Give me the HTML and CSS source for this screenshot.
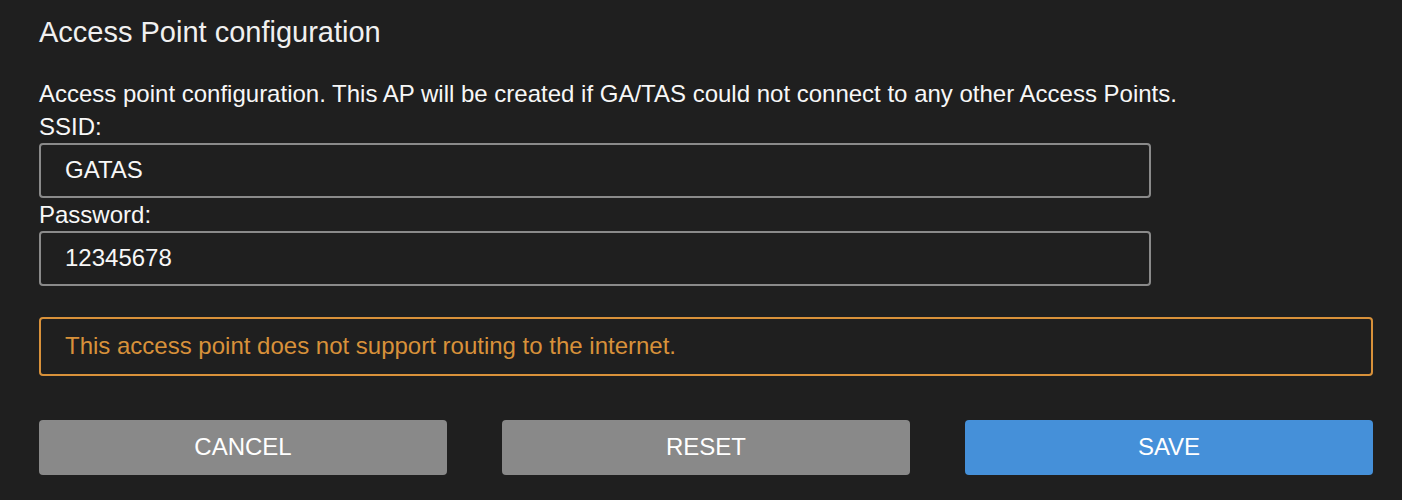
FILE: index.html
```html
<!DOCTYPE html>
<html>
<head>
<meta charset="utf-8">
<link rel="stylesheet" href="styles.css">
</head>
<body>
<div class="page">
  <h1 class="title">Access Point configuration</h1>
  <p class="desc">Access point configuration. This AP will be created if GA/TAS could not connect to any other Access Points.</p>
  <div class="field">
    <label class="label">SSID:</label>
    <div class="input">GATAS</div>
  </div>
  <div class="field">
    <label class="label">Password:</label>
    <div class="input">12345678</div>
  </div>
  <div class="warning">This access point does not support routing to the internet.</div>
  <div class="buttons">
    <button class="btn btn-grey">CANCEL</button>
    <button class="btn btn-grey">RESET</button>
    <button class="btn btn-blue">SAVE</button>
  </div>
</div>
</body>
</html>
```
FILE: styles.css
```css
html, body {
  margin: 0;
  padding: 0;
  background: #1f1f1f;
}
body {
  font-family: "Liberation Sans", Arial, sans-serif;
  font-size: 24px;
  color: #f7f7f7;
}
.page {
  padding: 15px 29px 0 39px;
  display: flex;
  flex-direction: column;
}
.title {
  margin: 0;
  font-size: 29px;
  font-weight: normal;
  line-height: 34.5px;
  color: #f0f0f0;
}
.desc {
  margin: 28px 0 0 0;
  font-size: 24px;
  line-height: 32px;
}
.field {
  display: flex;
  flex-direction: column;
  width: 83.33%;
}
.label {
  font-size: 24px;
  line-height: 33px;
}
.input {
  box-sizing: border-box;
  height: 55px;
  border: 2px solid #8a8a8a;
  border-radius: 4px;
  padding: 0 24px;
  display: flex;
  align-items: center;
  font-size: 24px;
}
.warning {
  box-sizing: border-box;
  margin-top: 31px;
  height: 59px;
  border: 2px solid #d8913a;
  border-radius: 4px;
  padding: 0 24px;
  display: flex;
  align-items: center;
  font-size: 24px;
  color: #d8913a;
}
.buttons {
  margin-top: 44px;
  display: grid;
  grid-template-columns: 1fr 1fr 1fr;
  column-gap: 55px;
}
.btn {
  height: 55px;
  border: none;
  border-radius: 4px;
  font-family: "Liberation Sans", Arial, sans-serif;
  font-size: 24px;
  color: #ffffff;
}
.btn-grey {
  background: #898989;
}
.btn-blue {
  background: #4590d9;
}
```
